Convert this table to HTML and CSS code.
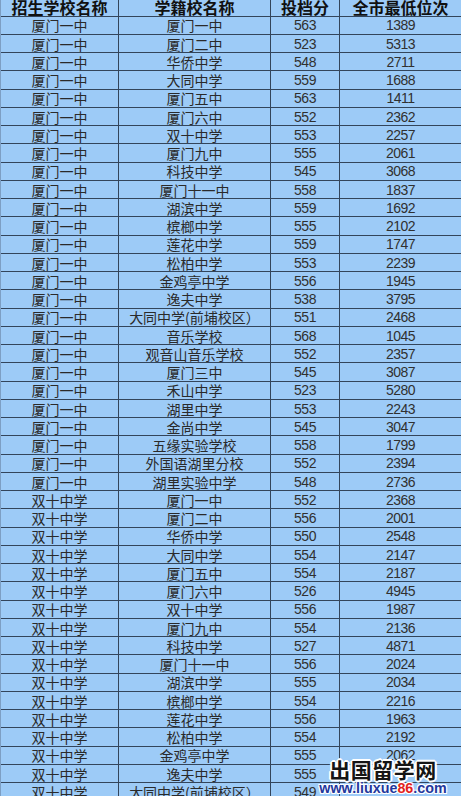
FILE: index.html
```html
<!DOCTYPE html>
<html lang="zh-CN">
<head>
<meta charset="utf-8">
<title>招生学校投档分</title>
<link rel="stylesheet" href="styles.css">
</head>
<body>
<div class="sheet">
<div class="c h">招生学校名称</div><div class="c h">学籍校名称</div><div class="c h">投档分</div><div class="c h">全市最低位次</div>
<div class="c">厦门一中</div><div class="c">厦门一中</div><div class="c n">563</div><div class="c n">1389</div>
<div class="c">厦门一中</div><div class="c">厦门二中</div><div class="c n">523</div><div class="c n">5313</div>
<div class="c">厦门一中</div><div class="c">华侨中学</div><div class="c n">548</div><div class="c n">2711</div>
<div class="c">厦门一中</div><div class="c">大同中学</div><div class="c n">559</div><div class="c n">1688</div>
<div class="c">厦门一中</div><div class="c">厦门五中</div><div class="c n">563</div><div class="c n">1411</div>
<div class="c">厦门一中</div><div class="c">厦门六中</div><div class="c n">552</div><div class="c n">2362</div>
<div class="c">厦门一中</div><div class="c">双十中学</div><div class="c n">553</div><div class="c n">2257</div>
<div class="c">厦门一中</div><div class="c">厦门九中</div><div class="c n">555</div><div class="c n">2061</div>
<div class="c">厦门一中</div><div class="c">科技中学</div><div class="c n">545</div><div class="c n">3068</div>
<div class="c">厦门一中</div><div class="c">厦门十一中</div><div class="c n">558</div><div class="c n">1837</div>
<div class="c">厦门一中</div><div class="c">湖滨中学</div><div class="c n">559</div><div class="c n">1692</div>
<div class="c">厦门一中</div><div class="c">槟榔中学</div><div class="c n">555</div><div class="c n">2102</div>
<div class="c">厦门一中</div><div class="c">莲花中学</div><div class="c n">559</div><div class="c n">1747</div>
<div class="c">厦门一中</div><div class="c">松柏中学</div><div class="c n">553</div><div class="c n">2239</div>
<div class="c">厦门一中</div><div class="c">金鸡亭中学</div><div class="c n">556</div><div class="c n">1945</div>
<div class="c">厦门一中</div><div class="c">逸夫中学</div><div class="c n">538</div><div class="c n">3795</div>
<div class="c">厦门一中</div><div class="c">大同中学(前埔校区）</div><div class="c n">551</div><div class="c n">2468</div>
<div class="c">厦门一中</div><div class="c">音乐学校</div><div class="c n">568</div><div class="c n">1045</div>
<div class="c">厦门一中</div><div class="c">观音山音乐学校</div><div class="c n">552</div><div class="c n">2357</div>
<div class="c">厦门一中</div><div class="c">厦门三中</div><div class="c n">545</div><div class="c n">3087</div>
<div class="c">厦门一中</div><div class="c">禾山中学</div><div class="c n">523</div><div class="c n">5280</div>
<div class="c">厦门一中</div><div class="c">湖里中学</div><div class="c n">553</div><div class="c n">2243</div>
<div class="c">厦门一中</div><div class="c">金尚中学</div><div class="c n">545</div><div class="c n">3047</div>
<div class="c">厦门一中</div><div class="c">五缘实验学校</div><div class="c n">558</div><div class="c n">1799</div>
<div class="c">厦门一中</div><div class="c">外国语湖里分校</div><div class="c n">552</div><div class="c n">2394</div>
<div class="c">厦门一中</div><div class="c">湖里实验中学</div><div class="c n">548</div><div class="c n">2736</div>
<div class="c">双十中学</div><div class="c">厦门一中</div><div class="c n">552</div><div class="c n">2368</div>
<div class="c">双十中学</div><div class="c">厦门二中</div><div class="c n">556</div><div class="c n">2001</div>
<div class="c">双十中学</div><div class="c">华侨中学</div><div class="c n">550</div><div class="c n">2548</div>
<div class="c">双十中学</div><div class="c">大同中学</div><div class="c n">554</div><div class="c n">2147</div>
<div class="c">双十中学</div><div class="c">厦门五中</div><div class="c n">554</div><div class="c n">2187</div>
<div class="c">双十中学</div><div class="c">厦门六中</div><div class="c n">526</div><div class="c n">4945</div>
<div class="c">双十中学</div><div class="c">双十中学</div><div class="c n">556</div><div class="c n">1987</div>
<div class="c">双十中学</div><div class="c">厦门九中</div><div class="c n">554</div><div class="c n">2136</div>
<div class="c">双十中学</div><div class="c">科技中学</div><div class="c n">527</div><div class="c n">4871</div>
<div class="c">双十中学</div><div class="c">厦门十一中</div><div class="c n">556</div><div class="c n">2024</div>
<div class="c">双十中学</div><div class="c">湖滨中学</div><div class="c n">555</div><div class="c n">2034</div>
<div class="c">双十中学</div><div class="c">槟榔中学</div><div class="c n">554</div><div class="c n">2216</div>
<div class="c">双十中学</div><div class="c">莲花中学</div><div class="c n">556</div><div class="c n">1963</div>
<div class="c">双十中学</div><div class="c">松柏中学</div><div class="c n">554</div><div class="c n">2192</div>
<div class="c">双十中学</div><div class="c">金鸡亭中学</div><div class="c n">555</div><div class="c n">2062</div>
<div class="c">双十中学</div><div class="c">逸夫中学</div><div class="c n">555</div><div class="c n"></div>
<div class="c">双十中学</div><div class="c">大同中学(前埔校区）</div><div class="c n">549</div><div class="c n"></div>
</div>
<div class="wm">
  <div class="wm-cn">出国留学网</div>
  <div class="wm-url">www.liuxue<span class="wm-red">86</span>.com</div>
</div>
</body>
</html>
```

FILE: styles.css
```css
html, body {
  margin: 0;
  padding: 0;
  width: 461px;
  height: 796px;
  overflow: hidden;
  background: #9dcbf7;
}

.sheet {
  display: grid;
  grid-template-columns: 118px 152px 69px 1fr;
  grid-template-rows: 16.7px;
  grid-auto-rows: 18.26px;
  background: #9dcbf7;
  border-left: 1px solid #7d9fc4;
  box-sizing: border-box;
  width: 461px;
}

.c {
  box-sizing: border-box;
  border-bottom: 1px solid #33455b;
  border-right: 1px solid #33455b;
  display: flex;
  align-items: center;
  justify-content: center;
  font-family: "Noto Sans CJK SC", "Noto Sans", sans-serif;
  font-size: 14px;
  line-height: 14px;
  color: #2a2a2a;
  white-space: nowrap;
  overflow: hidden;
}

.c:nth-child(4n) {
  border-right: none;
}

.c.h {
  font-size: 16px;
  line-height: 15px;
  font-weight: 700;
  color: #111;
  padding-bottom: 1px;
  overflow: visible;
}

.c.n {
  font-family: "Liberation Sans", Arial, sans-serif;
  font-size: 14px;
  letter-spacing: -0.5px;
  color: #303030;
}

.wm {
  position: absolute;
  left: 316px;
  top: 757px;
  width: 134px;
  display: flex;
  flex-direction: column;
  align-items: center;
}

.wm-cn {
  font-family: "Noto Sans CJK SC", sans-serif;
  font-weight: 700;
  font-size: 21px;
  line-height: 24px;
  letter-spacing: 0.5px;
  color: #151515;
  text-shadow: 0 0 2px #fff, 1px 1px 0 #fff, -1px -1px 0 #fff, 1px -1px 0 #fff, -1px 1px 0 #fff, 2px 0 0 #fff, -2px 0 0 #fff, 0 2px 0 #fff, 0 -2px 0 #fff;
}

.wm-url {
  font-family: "Liberation Sans", Arial, sans-serif;
  font-weight: 700;
  font-size: 14.3px;
  line-height: 15px;
  color: #23379c;
  text-shadow: 0 0 2px #fff, 1px 1px 0 #fff, -1px -1px 0 #fff, 1px -1px 0 #fff, -1px 1px 0 #fff;
}

.wm-red {
  color: #e3231c;
}
```
